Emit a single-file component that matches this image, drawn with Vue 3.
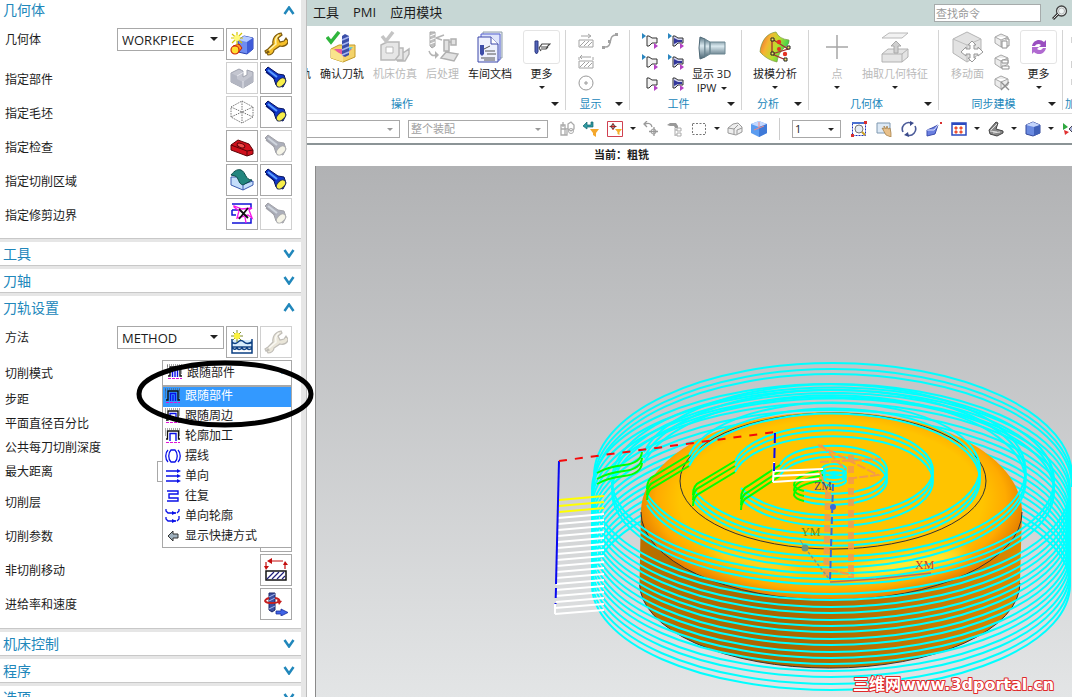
<template>
  <div class="app">
    <svg class="sprite" width="0" height="0" aria-hidden="true">
      <defs>
        <linearGradient id="g-steel" x1="0" y1="0" x2="0" y2="1">
          <stop offset="0" stop-color="#5b7785"/>
          <stop offset=".4" stop-color="#dbeaf0"/>
          <stop offset="1" stop-color="#4b6674"/>
        </linearGradient>
        <linearGradient id="g-heat" x1="0" y1="0" x2="1" y2=".4">
          <stop offset="0" stop-color="#e8543a"/>
          <stop offset=".35" stop-color="#f5b431"/>
          <stop offset=".65" stop-color="#b9e02c"/>
          <stop offset="1" stop-color="#2fd052"/>
        </linearGradient>
      </defs>
      <symbol id="i-torch" viewBox="0 0 24 24">
        <path d="M1 4 4 1 14 8 20 9 22 15 19 21 12 19 10 13Z" fill="#1037c8" stroke="#07135c" stroke-width="1"/>
        <path d="M4 4 13 11" stroke="#5b9dff" stroke-width="2"/>
        <path d="M2 6 11 13" stroke="#081a78" stroke-width="1.5"/>
        <ellipse cx="17" cy="16.500" rx="5.500" ry="3.500" transform="rotate(-45 17 16.500)" fill="#f7ee4a" stroke="#2b3350"/>
      </symbol>
      <symbol id="i-wrench" viewBox="0 0 24 24">
        <path d="M1 19 4 17 9 12C8 7 11 2 17 1L18 3 14 6 16 10 20 9 22 6 24 9C24 13 20 15 16 14L10 18C10 21 7 23 4 23L3 21 5 20 4 19 2 21Z" fill="#f6c02a" stroke="#7c5a10" stroke-width="1.200"/>
        <path d="M5 18 12 12C11 8 12 5 15 3" fill="none" stroke="#fff4b0" stroke-width="1.500"/>
      </symbol>
      <symbol id="i-newgeo" viewBox="0 0 24 24">
        <path d="M8 8 14 4 23 6V17L17 22 8 20Z" fill="#6f8cf0" stroke="#2840b0"/>
        <path d="M8 8 17 10 23 6 14 4Z" fill="#b5cbff"/>
        <path d="M17 10V22L23 17V6Z" fill="#3f5bd8"/>
        <path d="M3 14 9 12 12 16 8 21 3 21Z" fill="#ff9b1f" stroke="#c01c10"/>
        <circle cx="5" cy="18" r="4" fill="#ffdf30" stroke="#d02a10" stroke-width="1.200"/>
        <path d="M7 0V13M1 6H13M2 2 12 11M12 1 2 11" stroke="#d5c400" stroke-width="1.200"/>
        <circle cx="7" cy="6" r="3" fill="#fff97a"/>
      </symbol>
      <symbol id="i-part" viewBox="0 0 24 24">
        <path d="M1 7 9 3 13 5V11L17 9V4L23 6V16L13 22 1 16Z" fill="#c4c6d0" stroke="#9fa2ae"/>
        <path d="M1 7 7 10V13L13 16 23 9V16L13 22 1 16Z" fill="#b3b6c2"/>
        <path d="M13 15V22M7 10 14 6" stroke="#e6e7ee"/>
      </symbol>
      <symbol id="i-blank" viewBox="0 0 24 24">
        <path d="M12 1 23 7V17L12 23 1 17V7ZM12 1V12M1 7 23 17M23 7 1 17M12 12V23" fill="none" stroke="#777" stroke-width="1" stroke-dasharray="1.500 1"/>
      </symbol>
      <symbol id="i-check" viewBox="0 0 24 24">
        <path d="M1 11 8 6 19 10 23 16V20L17 22 1 16Z" fill="#d0101c" stroke="#5c0408"/>
        <path d="M1 11 17 17 23 16M17 17V22" stroke="#5c0408" fill="none"/>
        <ellipse cx="11" cy="11.500" rx="4" ry="2" fill="#f04a4a" stroke="#5c0408" transform="rotate(20 11 11.500)"/>
      </symbol>
      <symbol id="i-area" viewBox="0 0 24 24">
        <path d="M1 9V17L13 22 23 17V13L14 16 8 9Z" fill="#c5defa" stroke="#3b5bb0"/>
        <path d="M1 7C5 2 8 1 11 2C16 4 15 12 22 12L13 17C8 16 9 9 5 8Z" fill="#23867e" stroke="#0b4b48"/>
        <path d="M13 17V22" stroke="#3b5bb0"/>
      </symbol>
      <symbol id="i-trim" viewBox="0 0 24 24">
        <path d="M2 2H21V7M2 8V13H6M21 16V21H2M2 8H8" fill="none" stroke="#1111d8" stroke-width="1.500"/>
        <path d="M4 5 9 9 7 16 18 13 22 16 19 8 22 6 12 7 4 4ZM15 15 16 21" fill="none" stroke="#f414e8" stroke-width="1.300"/>
        <path d="M9 7 18 16M18 6 9 17" stroke="#111" stroke-width="1.800"/>
      </symbol>
      <symbol id="i-method" viewBox="0 0 24 24">
        <path d="M2 10H22V16H2Z" fill="#d7ecfb"/>
        <path d="M2 9V23H22V9M2 12Q5 15 8 12T14 12T22 12M2 17H22M2 17Q4 21 7 18Q9 21 12 18Q14 21 17 18Q19 21 22 18" fill="none" stroke="#0b3f82" stroke-width="1.500"/>
        <path d="M7 0V12M1 6H13M3 2 11 10M11 2 3 10" stroke="#7c8a28" stroke-width="1"/>
        <circle cx="7" cy="6" r="3.200" fill="#fbf23e"/>
      </symbol>
      <symbol id="i-noncut" viewBox="0 0 24 24">
        <path d="M2 13H22V22H2Z" fill="#fff" stroke="#111" stroke-width="1.500"/>
        <path d="M3 21 10 14M8 21 15 14M13 21 20 14M18 21 21 18" stroke="#22207c" stroke-width="1.200"/>
        <path d="M19 3H6M2 4V9M21 11V6" stroke="#c40d0d" stroke-width="1.200"/>
        <path d="M8 0 3 3 8 6ZM0 8H5L2 12ZM19 7H24L21 3Z" fill="#c40d0d"/>
      </symbol>
      <symbol id="i-feed" viewBox="0 0 24 24">
        <path d="M5 1H11V18L8 20 5 18Z" fill="#3c4fa2" stroke="#1b2768"/>
        <path d="M5 5 11 2M5 9 11 6M5 17 11 14" stroke="#a9b9ee"/>
        <path d="M5 6C-1 8 0 11 8 11S18 7 11 6" fill="none" stroke="#c41f1f" stroke-width="2"/>
        <path d="M13 8 15 13 18 9Z" fill="#c41f1f"/>
        <path d="M12 19H17V17L24 20.500 17 24V22H12Z" fill="#3f63e6" stroke="#1a2f9a" stroke-width=".8"/>
      </symbol>
      <symbol id="i-m-part" viewBox="0 0 16 16">
        <path d="M0 1H16M0 2H2M14 2H16M0 3H2M14 3H16M0 5H2M14 5H16M0 7H2M14 7H16M0 9H2M14 9H16" stroke="#555" stroke-dasharray="1 1"/>
        <path d="M1 12H3V3H13V12H15" fill="none" stroke="#111" stroke-width="1.400"/>
        <path d="M5.500 13V5.500H10.500V13M8 13V7" fill="none" stroke="#0a10e8" stroke-width="1.400"/>
        <path d="M1 14.500H15" stroke="#e012d8" stroke-dasharray="3 1"/>
      </symbol>
      <symbol id="i-m-around" viewBox="0 0 16 16">
        <path d="M0 1H16M0 3H2M14 3H16M0 5H2M14 5H16M0 7H2M14 7H16" stroke="#555" stroke-dasharray="1 1"/>
        <path d="M1 12H3V3H13V12H15" fill="none" stroke="#111" stroke-width="1.400"/>
        <path d="M5 12V5.500H11V12H8V8" fill="none" stroke="#0a10e8" stroke-width="1.300"/>
        <path d="M1 14.500H15" stroke="#e012d8" stroke-dasharray="3 1"/>
      </symbol>
      <symbol id="i-m-profile" viewBox="0 0 16 16">
        <path d="M0 1H16M0 3H2M14 3H16M0 5H2M14 5H16M0 7H2M14 7H16" stroke="#555" stroke-dasharray="1 1"/>
        <path d="M1 11H2.500V3H13.500V11H15" fill="none" stroke="#111" stroke-width="1.300"/>
        <path d="M5 13V5.500H11V13" fill="none" stroke="#0a10e8" stroke-width="1.400"/>
        <path d="M1 14.500H15" stroke="#e012d8" stroke-dasharray="3 1"/>
      </symbol>
      <symbol id="i-m-trochoid" viewBox="0 0 16 16">
        <path d="M3 2C0 5 0 11 3 14M13 2C16 5 16 11 13 14M6 2C3 5 3 11 6 14H10C13 11 13 5 10 2Z" fill="none" stroke="#0a10e8" stroke-width="1.300"/>
      </symbol>
      <symbol id="i-m-zig" viewBox="0 0 16 16">
        <path d="M1 3H12M1 8H12M1 13H12" stroke="#0a10e8" stroke-width="1.400"/>
        <path d="M12 1 16 3 12 5ZM12 6 16 8 12 10ZM12 11 16 13 12 15Z" fill="#0a10e8"/>
      </symbol>
      <symbol id="i-m-zigzag" viewBox="0 0 16 16">
        <path d="M2 3H13V6H4V10H13V13H2" fill="none" stroke="#0a10e8" stroke-width="1.400"/>
      </symbol>
      <symbol id="i-m-contour" viewBox="0 0 16 16">
        <path d="M1 1V3L3 5H11M14 1V3L12 5M1 9V11L3 13H11M14 8V11L12 13" fill="none" stroke="#0a10e8" stroke-width="1.300"/>
        <path d="M7 3 11 5 7 7ZM7 11 11 13 7 15Z" fill="#0a10e8"/>
      </symbol>
      <symbol id="i-m-short" viewBox="0 0 16 16">
        <path d="M3 8 8 3V6H13V10H8V13Z" fill="#9fb0bd" stroke="#333"/>
      </symbol>

      <symbol id="i-verify" viewBox="0 0 32 32">
        <path d="M5 18 13 14H29V26L17 31 5 27Z" fill="#f4d36a" stroke="#c39a28"/>
        <path d="M8 18H26L17 26Z" fill="#e95a9d"/>
        <path d="M18 17 27 16 18 25Z" fill="#4fc5e0"/>
        <path d="M5 18 17 24V31L5 27Z" fill="#fae48c"/>
        <path d="M16 5 19 3 23 5V24L19 26 16 24Z" fill="#3b4fa8"/>
        <path d="M16 9 23 6M16 14 23 11M16 19 23 16M16 24 23 21" stroke="#a8b6f0" stroke-width="1.500"/>
        <path d="M1 6 5 11 13 1" fill="none" stroke="#2fb63c" stroke-width="3.500"/>
      </symbol>
      <symbol id="i-machine" viewBox="0 0 32 32">
        <path d="M2 14 8 11H20V24L16 29H2ZM20 17H24V29H17M24 22 30 18V23L26 30H18" fill="#e6e6e6" stroke="#b8b8b8" stroke-width="1.500"/>
        <path d="M7 16H14V22H7Z" fill="#fff" stroke="#b8b8b8"/>
        <path d="M3 5 7 10 14 1" fill="none" stroke="#c4c4c4" stroke-width="3.500"/>
      </symbol>
      <symbol id="i-post" viewBox="0 0 32 32">
        <path d="M3 1H8V15L5 17 3 15Z" fill="#c0c0c0" stroke="#a8a8a8"/>
        <path d="M3 5 8 3M3 9 8 7M3 13 8 11" stroke="#fff"/>
        <path d="M9 7 17 4M9 7 15 9M2 20Q4 26 9 24" stroke="#b4b4b4" stroke-width="1.500" fill="none"/>
        <path d="M8 20 12 24 8 28Z" fill="#b4b4b4"/>
        <path d="M17 9H22V20H17ZM24 8H29V14H24ZM22 11H24M14 27 19 21 31 23 27 30Z" fill="#e2e2e2" stroke="#b0b0b0" stroke-width="1.500"/>
      </symbol>
      <symbol id="i-doc" viewBox="0 0 32 32">
        <path d="M9 1H28V27H9Z" fill="#e2e8f4" stroke="#92a0a8"/>
        <path d="M7 3H26V29H7Z" fill="#dfe5fb" stroke="#5561d0"/>
        <path d="M4 6H17L24 13V31H4Z" fill="#eef1fe" stroke="#3a46a8"/>
        <path d="M17 6V13H24" fill="#fff" stroke="#3a46a8"/>
        <path d="M6 14H10V23L8 25 6 23Z" fill="#3c4ca8"/>
        <path d="M10 18 16 15M11 20H21M13 23H22M7 27H21M10 29H21" stroke="#555"/>
      </symbol>
      <symbol id="i-moreop" viewBox="0 0 18 18">
        <path d="M2 3H5V14L3.500 16 2 14Z" fill="#5162b8" stroke="#2a3780"/>
        <path d="M6 10 9 6H17L14 9H8M6 10 8 13M8 11H13L15 9" fill="none" stroke="#444" stroke-width="1.200"/>
      </symbol>
      <symbol id="i-moresync" viewBox="0 0 18 18">
        <path d="M2 8C3 2 10 0 14 4L16 2V9H9L11 7C9 5 6 6 5 8Z" fill="#9a4fc0"/>
        <path d="M16 10C15 16 8 18 4 14L2 16V9H9L7 11C9 13 12 12 13 10Z" fill="#b06ad0"/>
      </symbol>
      <symbol id="i-hatch" viewBox="0 0 16 16">
        <path d="M1 7H15V14H1ZM2 13 7 8M6 13 11 8M10 13 14 9M3 3H12M10 1 13 3 10 5" fill="none" stroke="#a2a2a2"/>
      </symbol>
      <symbol id="i-hatch2" viewBox="0 0 16 16">
        <path d="M1 7H15V14H1ZM2 13 7 8M6 13 11 8M10 13 14 9M3 3H13M1 3V6M15 3V6M4 1 2 3 4 5" fill="none" stroke="#a2a2a2"/>
      </symbol>
      <symbol id="i-curve" viewBox="0 0 16 16">
        <path d="M2 14C12 15 5 2 14 2" fill="none" stroke="#a2a2a2" stroke-width="1.500"/>
        <path d="M0 13H3V16H0ZM6 7H9V10H6ZM13 0H16V3H13Z" fill="#a2a2a2"/>
      </symbol>
      <symbol id="i-circle" viewBox="0 0 16 16">
        <circle cx="8" cy="8" r="7" fill="none" stroke="#999"/>
        <path d="M8 6V10M6 8H10" stroke="#999"/>
      </symbol>
      <symbol id="i-wp" viewBox="0 0 16 16">
        <path d="M5 3H7L10 5H15V10H10L7 13H5Z" fill="#f2f2f2" stroke="#333"/>
        <path d="M12 10 16 13 12 16Z" fill="#b442c4"/>
      </symbol>
      <symbol id="i-wpb" viewBox="0 0 16 16">
        <path d="M5 3H7L10 5H15V10H10L7 13H5Z" fill="#d0d2ee" stroke="#333"/>
        <path d="M6 5 10 7H14V9H10L6 11Z" fill="#34389c"/>
        <path d="M12 10 16 13 12 16Z" fill="#b442c4"/>
      </symbol>
      <symbol id="i-ipw" viewBox="0 0 32 32">
        <path d="M4 6 9 8V26L4 28Q2 17 4 6Z" fill="url(#g-steel)" stroke="#506a78"/>
        <path d="M9 8 14 11V23L9 26ZM14 11H29V23H14Z" fill="url(#g-steel)" stroke="#6c8792"/>
      </symbol>
      <symbol id="i-draft" viewBox="0 0 32 32">
        <path d="M1 21C2 10 8 2 17 1Q20 8 30 9Q31 13 26 16 19 22 18 31 8 29 1 21Z" fill="url(#g-heat)" stroke="#7c9b3c" stroke-width=".7"/>
        <path d="M13 8 29 18 13 23 27 29M13 8V23" fill="none" stroke="#a33030" stroke-width="1.300"/>
        <path d="M12 7H15V10H12ZM28 15H31V18H28ZM12 21H15V24H12ZM25 27H28V30H25Z" fill="#f6e76a" stroke="#222"/>
        <circle cx="20" cy="11" r="2.200" fill="#e53222"/>
        <circle cx="26" cy="23" r="2.200" fill="#e53222"/>
        <circle cx="20" cy="18" r="2" fill="#e53222"/>
      </symbol>
      <symbol id="i-plus" viewBox="0 0 32 32">
        <path d="M16 4V28M5 16H27" stroke="#a6a6a6" stroke-width="1.500"/>
      </symbol>
      <symbol id="i-extract" viewBox="0 0 32 32">
        <path d="M10 2H29L23 7H3Z" fill="#f2f2f2" stroke="#b9b9b9"/>
        <path d="M3 23 9 18H29V26L23 31H3Z" fill="#e4e4e4" stroke="#b2b2b2"/>
        <path d="M3 23H23V31M23 23 29 18" fill="none" stroke="#b2b2b2"/>
        <path d="M15 22V15H12L17 10 22 15H19V22Z" fill="#cfcfcf" stroke="#a8a8a8"/>
      </symbol>
      <symbol id="i-moveface" viewBox="0 0 32 32">
        <path d="M15 1 29 8V22L15 31 1 22V8Z" fill="#e2e2e2" stroke="#b4b4b4"/>
        <path d="M1 8 15 14 29 8M15 14V31" fill="none" stroke="#bdbdbd"/>
        <path d="M20 10 24 14H22V18H26V16L31 21 26 25V23H22V27H24L20 31 16 27H18V23H14V25L9 21 14 16V18H18V14H16Z" fill="#fff" stroke="#999"/>
      </symbol>
      <symbol id="i-box1" viewBox="0 0 16 16">
        <path d="M7 1 14 4V10L7 14 1 10V4ZM1 4 7 7 14 4M7 7V14" fill="#ececec" stroke="#a8a8a8"/>
        <path d="M8 8H13V15H8ZM11 6H15V13H13" fill="#fff" stroke="#8f8f8f"/>
      </symbol>
      <symbol id="i-box2" viewBox="0 0 16 16">
        <path d="M7 1 14 4V10L7 14 1 10V4ZM1 4 7 7 14 4M7 7V14" fill="#ececec" stroke="#a8a8a8"/>
        <path d="M8 6H14V9H8ZM8 12H15V15H8Z" fill="#fff" stroke="#8f8f8f"/>
      </symbol>
      <symbol id="i-box3" viewBox="0 0 16 16">
        <path d="M7 1 14 4V10L7 14 1 10V4ZM1 4 7 7 14 4M7 7V14" fill="#ececec" stroke="#a8a8a8"/>
        <path d="M7 7 15 15M15 7 7 15" stroke="#8f8f8f" stroke-width="1.300"/>
      </symbol>
      <symbol id="i-find" viewBox="0 0 16 16">
        <circle cx="9.500" cy="6" r="5" fill="#eef4f4" stroke="#444" stroke-width="1.300"/>
        <circle cx="9.500" cy="6" r="3" fill="none" stroke="#999" stroke-width=".7"/>
        <path d="M6 9 1 14" stroke="#333" stroke-width="3"/>
        <path d="M6 9 1.500 13.500" stroke="#ddd" stroke-width="1"/>
      </symbol>

      <symbol id="i-s-asm" viewBox="0 0 16 16">
        <path d="M2 4H6V14H2ZM2 8H9M4 1V6M9 3 12 1 15 4V8L12 10 9 8ZM8 9V14H4" fill="none" stroke="#aaa" stroke-width="1.300"/>
        <circle cx="12" cy="10" r="2.500" fill="none" stroke="#aaa"/>
      </symbol>
      <symbol id="i-s-undo" viewBox="0 0 16 16">
        <path d="M4 1 0 5 4 8V6H10V1H8V4H4Z" fill="#2f9aa2" stroke="#12666e" stroke-width=".7"/>
        <path d="M7 8H16L13 12V16L10 14V12Z" fill="#f4a72c"/>
      </symbol>
      <symbol id="i-s-filter" viewBox="0 0 16 16">
        <path d="M.5.500H15.500V15.500H.5Z" fill="#fff" stroke="#d04050"/>
        <path d="M6 2V9M2.500 5.500H9.500" stroke="#c02020" stroke-width="1.200"/>
        <circle cx="6" cy="5.500" r="2" fill="none" stroke="#333" stroke-width=".8"/>
        <path d="M8 8H15L12.500 11V14L10.500 13V11Z" fill="#f4b12c"/>
      </symbol>
      <symbol id="i-s-snap" viewBox="0 0 16 16">
        <path d="M9 6Q8 1 2 3M4 0 1 3 4 6M11 6V15M6 10.500H15" fill="none" stroke="#999" stroke-width="1.300"/>
        <circle cx="10.500" cy="10.500" r="2.500" fill="none" stroke="#999"/>
      </symbol>
      <symbol id="i-s-tree" viewBox="0 0 16 16">
        <path d="M0 4 3 2H9L11 5V7H8L7 5H3Z" fill="#999"/>
        <path d="M8 7V15M8 9H10M8 14H10M10 7H14V10H10ZM10 12H14V15H10Z" fill="none" stroke="#aaa"/>
      </symbol>
      <symbol id="i-s-rect" viewBox="0 0 16 16">
        <path d="M1.500 2.500H14.500V13.500H1.500Z" fill="none" stroke="#777" stroke-dasharray="2 1.500"/>
      </symbol>
      <symbol id="i-s-solid" viewBox="0 0 16 16">
        <path d="M1 7 6 3 11 2 15 6V11L9 14 1 12Z" fill="#eee" stroke="#999"/>
        <path d="M1 7 7 8 11 4M7 8V13M10 13V9L15 7" fill="none" stroke="#999"/>
      </symbol>
      <symbol id="i-s-cube" viewBox="0 0 16 16">
        <path d="M8 0 16 3V12L8 16 0 12V3Z" fill="#5b9cf0"/>
        <path d="M0 3 8 6 16 3 8 0Z" fill="#c3d8ff"/>
        <path d="M8 6V16L16 12V3Z" fill="#3f7ad8"/>
        <path d="M8 1V7L3 9M8 7 13 5" fill="none" stroke="#e88"/>
      </symbol>
      <symbol id="i-s-zoom" viewBox="0 0 16 16">
        <path d="M1.500 2.500H14.500V14.500H1.500Z" fill="none" stroke="#1c2fb8" stroke-dasharray="2 1"/>
        <path d="M1 2H13" stroke="#4a70d0" stroke-width="2"/>
        <circle cx="8" cy="8" r="4" fill="#e7edf4" stroke="#777"/>
        <path d="M11 11 14 14" stroke="#caa020" stroke-width="2"/>
        <path d="M13 0H16V3H13ZM0 13H3V16H0Z" fill="#d83030"/>
      </symbol>
      <symbol id="i-s-pan" viewBox="0 0 16 16">
        <path d="M1 2H14V12H1Z" fill="#dde9f5" stroke="#7f98b0"/>
        <path d="M6 7 8 8 8 5 10 8 11 5 12 8 14 7 15 12V16L10 14Z" fill="#e8c08a" stroke="#a07a40" stroke-width=".7"/>
      </symbol>
      <symbol id="i-s-rotate" viewBox="0 0 16 16">
        <path d="M2 11A6.500 6.500 0 0 1 10 2M14 5A6.500 6.500 0 0 1 6 14" fill="none" stroke="#4a5a98" stroke-width="1.600"/>
        <path d="M9 0 13 2 9 5ZM7 11 3 14 8 16Z" fill="#3a4a8a"/>
      </symbol>
      <symbol id="i-s-persp" viewBox="0 0 16 16">
        <path d="M1 9 6 7 12 4 9 13 1 15Z" fill="#6a7fe0" stroke="#3a4cae"/>
        <path d="M1 9 8 9 12 4" fill="none" stroke="#dfe5ff"/>
        <path d="M14 1H16V3H14Z" fill="#d83030"/>
      </symbol>
      <symbol id="i-s-win" viewBox="0 0 16 16">
        <path d="M1 2H15V14H1Z" fill="#fff" stroke="#2b4ac0" stroke-width="1.500"/>
        <path d="M1 2H15V4H1Z" fill="#2b4ac0"/>
        <path d="M4 6H6V8H4ZM9 6H11V8H9ZM4 10H6V12H4ZM9 10H11V12H9Z" fill="#ee5030" stroke="#ee5030"/>
      </symbol>
      <symbol id="i-s-shade" viewBox="0 0 16 16">
        <path d="M1 9 8 1 10 2 8 8 15 10V12L9 15 2 13Z" fill="#888" stroke="#444"/>
        <path d="M3 9 9 3M5 12 12 11M2 10 9 11" stroke="#ddd"/>
      </symbol>
      <symbol id="i-s-view" viewBox="0 0 16 16">
        <path d="M1 4 8 1 15 4V12L8 15 1 13Z" fill="#6a8ae0" stroke="#33489c"/>
        <path d="M1 4 9 6 15 4 8 1Z" fill="#c3d4fb"/>
        <path d="M9 6V15L15 12V4Z" fill="#4060b8"/>
      </symbol>
      <symbol id="i-s-csys" viewBox="0 0 16 16">
        <path d="M1 2 6 6 1 9Z" fill="#2fa840"/>
        <path d="M2 9 7 11 3 14Z" fill="#e03030"/>
        <path d="M7 8 13 2 16 8 12 13Z" fill="#aab4d8" stroke="#445"/>
      </symbol>
    </svg>

    <aside class="panel">
      <section class="section first">
        <h2 class="section-head">几何体<svg class="chevron" viewBox="0 0 12 9"><path d="M1.500 8 6 1.500 10.500 8"/></svg></h2>
        <div class="row top">
          <label for="geometry">几何体</label>
          <span class="select-box">
            <select id="geometry"><option>WORKPIECE</option></select>
          </span>
          <button class="icon-btn" aria-label="新建几何体"><svg><use href="#i-newgeo"/></svg></button>
          <button class="icon-btn" aria-label="编辑几何体"><svg><use href="#i-wrench"/></svg></button>
        </div>
        <div v-for="row in geometryRows" :key="row.label" class="row">
          <span class="row-label">{{ row.label }}</span>
          <button class="icon-btn" :class="{ pale: row.pale }" :aria-label="row.label"><svg><use :href="row.icon"/></svg></button>
          <button class="icon-btn" :disabled="!row.shown" aria-label="显示"><svg><use href="#i-torch"/></svg></button>
        </div>
      </section>

      <section v-for="name in ['工具', '刀轴']" :key="name" class="section">
        <h2 class="section-head">{{ name }}<svg class="chevron" viewBox="0 0 12 9"><path d="M1.500 1 6 7.500 10.500 1"/></svg></h2>
      </section>

      <section class="section settings">
        <h2 class="section-head">刀轨设置<svg class="chevron" viewBox="0 0 12 9"><path d="M1.500 8 6 1.500 10.500 8"/></svg></h2>
        <div class="row top">
          <label for="method">方法</label>
          <span class="select-box">
            <select id="method"><option>METHOD</option></select>
          </span>
          <button class="icon-btn" aria-label="新建方法"><svg><use href="#i-method"/></svg></button>
          <button class="icon-btn" disabled aria-label="编辑方法"><svg><use href="#i-wrench"/></svg></button>
        </div>
        <div class="row mode">
          <span id="cut-mode-label" class="row-label">切削模式</span>
          <div class="combo">
            <button class="combo-value" aria-labelledby="cut-mode-label" aria-expanded="true" @click="open = !open">
              <svg class="mode-icon"><use :href="cutModes[selected].icon"/></svg>{{ cutModes[selected].label }}<i class="caret mode-caret"></i>
            </button>
            <ul v-if="open" class="combo-list" role="listbox">
              <li
                  v-for="(mode, index) in cutModes"
                  :key="mode.label"
                  role="option"
                  :class="{ active: index === selected }"
                  @click="selected = index"
              >
                <svg class="mode-icon"><use :href="mode.icon"/></svg>{{ mode.label }}
              </li>
            </ul>
          </div>
        </div>
        <div class="row short"><span class="row-label">步距</span></div>
        <div class="row short"><span class="row-label">平面直径百分比</span></div>
        <div class="row short"><span class="row-label">公共每刀切削深度</span></div>
        <div class="row short">
          <label for="max-distance">最大距离</label>
          <input id="max-distance" class="field" type="text">
        </div>
        <div v-for="row in actionRows" :key="row.label" class="row">
          <span class="row-label">{{ row.label }}</span>
          <button class="icon-btn" :aria-label="row.label"><svg><use :href="row.icon"/></svg></button>
        </div>
      </section>

      <section v-for="name in ['机床控制', '程序', '选项']" :key="name" class="section">
        <h2 class="section-head">{{ name }}<svg class="chevron" viewBox="0 0 12 9"><path d="M1.500 1 6 7.500 10.500 1"/></svg></h2>
      </section>
    </aside>

    <main class="workspace">
      <nav class="menubar">
        <a href="#">工具</a>
        <a href="#">PMI</a>
        <a href="#">应用模块</a>
        <input class="search" type="text" placeholder="查找命令" aria-label="查找命令">
        <svg class="search-icon"><use href="#i-find"/></svg>
      </nav>

      <div class="ribbon">
        <div class="group operate">
          <div class="group-body">
            <button class="tool"><span class="tool-icon"></span>生成刀轨</button>
            <button class="tool"><span class="tool-icon"><svg><use href="#i-verify"/></svg></span>确认刀轨</button>
            <button class="tool" disabled><span class="tool-icon"><svg><use href="#i-machine"/></svg></span>机床仿真</button>
            <button class="tool" disabled><span class="tool-icon"><svg><use href="#i-post"/></svg></span>后处理</button>
            <button class="tool"><span class="tool-icon"><svg><use href="#i-doc"/></svg></span>车间文档</button>
            <button class="tool more"><span class="tool-icon"><svg><use href="#i-moreop"/></svg></span>更多<i class="caret"></i></button>
          </div>
          <div class="group-foot"><span>操作</span><i class="caret big"></i></div>
        </div>
        <div class="group display">
          <div class="group-body">
            <div class="icon-grid">
              <svg><use href="#i-hatch"/></svg>
              <svg><use href="#i-curve"/></svg>
              <svg><use href="#i-hatch2"/></svg>
              <span></span>
              <svg><use href="#i-circle"/></svg>
            </div>
          </div>
          <div class="group-foot"><span>显示</span><i class="caret big"></i></div>
        </div>
        <div class="group workpiece">
          <div class="group-body">
            <div class="icon-grid wide">
              <svg v-for="n in 6" :key="n" viewBox="0 0 16 16">
                <use :href="n % 2 ? '#i-wp' : '#i-wpb'" width="16" height="16"/>
                <path v-if="n < 5" d="M0 0 4 3 0 6Z" fill="#2a86c0"/>
              </svg>
            </div>
            <button class="tool"><span class="tool-icon"><svg><use href="#i-ipw"/></svg></span>显示 3D<span class="line">IPW<i class="caret"></i></span></button>
          </div>
          <div class="group-foot"><span>工件</span><i class="caret big"></i></div>
        </div>
        <div class="group analyse">
          <div class="group-body">
            <button class="tool"><span class="tool-icon"><svg><use href="#i-draft"/></svg></span>拔模分析<i class="caret"></i></button>
          </div>
          <div class="group-foot"><span>分析</span><i class="caret big"></i></div>
        </div>
        <div class="group geometry">
          <div class="group-body">
            <button class="tool" disabled><span class="tool-icon"><svg><use href="#i-plus"/></svg></span>点<i class="caret"></i></button>
            <button class="tool" disabled><span class="tool-icon"><svg><use href="#i-extract"/></svg></span>抽取几何特征<i class="caret"></i></button>
          </div>
          <div class="group-foot"><span>几何体</span><i class="caret big"></i></div>
        </div>
        <div class="group sync">
          <div class="group-body">
            <button class="tool" disabled><span class="tool-icon"><svg><use href="#i-moveface"/></svg></span>移动面</button>
            <div class="icon-grid single">
              <svg><use href="#i-box1"/></svg>
              <svg><use href="#i-box2"/></svg>
              <svg><use href="#i-box3"/></svg>
            </div>
            <button class="tool more"><span class="tool-icon"><svg><use href="#i-moresync"/></svg></span>更多<i class="caret"></i></button>
          </div>
          <div class="group-foot"><span>同步建模</span><i class="caret big"></i></div>
        </div>
        <div class="group process">
          <div class="group-body">
            <div class="icon-grid single">
              <svg><use href="#i-box1"/></svg>
              <svg><use href="#i-hatch"/></svg>
              <svg><use href="#i-box2"/></svg>
            </div>
          </div>
          <div class="group-foot"><span>加工</span></div>
        </div>
      </div>

      <div class="selection">
        <span class="select-box gray type"><select aria-label="类型过滤器"><option></option></select></span>
        <span class="select-box gray scope"><select aria-label="选择范围"><option>整个装配</option></select></span>
        <template v-for="(item, index) in leftTools" :key="index">
          <i v-if="item === '|'" class="cell-caret"><i class="caret"></i></i>
          <button v-else class="cell" :aria-label="item"><svg><use :href="'#i-s-' + item"/></svg></button>
        </template>
        <i class="divider"></i>
        <span class="select-box layer"><select aria-label="工作图层"><option>1</option></select></span>
        <template v-for="(item, index) in rightTools" :key="index">
          <i v-if="item === '|'" class="cell-caret"><i class="caret"></i></i>
          <button v-else class="cell wide" :aria-label="item"><svg><use :href="'#i-s-' + item"/></svg></button>
        </template>
      </div>

      <p class="status">当前：粗铣</p>

      <div class="viewport">
        <svg class="scene" viewBox="315 166 757 531" preserveAspectRatio="xMinYMin slice">
          <defs>
            <radialGradient id="dome" gradientUnits="userSpaceOnUse" cx="0" cy="0" r="1" gradientTransform="translate(830 500) scale(194 101)">
              <stop offset="0" stop-color="#ffc400"/>
              <stop offset=".78" stop-color="#ffc400"/>
              <stop offset=".9" stop-color="#ffab00"/>
              <stop offset="1" stop-color="#e88300"/>
            </radialGradient>
            <linearGradient id="wall" x1="0" x2="1" y1="0" y2="0">
              <stop offset="0" stop-color="#b87000"/>
              <stop offset=".35" stop-color="#a86400"/>
              <stop offset=".6" stop-color="#b87000"/>
              <stop offset="1" stop-color="#dc8a00"/>
            </linearGradient>
            <filter id="soft" x="-30%" y="-100%" width="160%" height="300%"><feGaussianBlur stdDeviation="6"/></filter>
          </defs>

          <g class="path">
            <path v-for="(d, i) in backPaths" :key="i" :d="d"/>
          </g>

          <path d="M640 510 638.500 583A190 85 0 0 0 1019 583L1021 510Z" fill="url(#wall)"/>
          <path d="M640 512C640 462 712 412 830 412S1021 462 1021 512A190.500 88 0 0 1 640 512Z" fill="url(#dome)"/>
          <ellipse cx="905" cy="564" rx="60" ry="8" fill="#fff23c" filter="url(#soft)" transform="rotate(-10 905 564)"/>
          <ellipse cx="755" cy="562" rx="45" ry="6" fill="#ffd92a" filter="url(#soft)" transform="rotate(14 755 562)"/>
          <g class="edge">
            <path d="M640 512A190.500 88 0 0 0 1021 512"/>
            <path d="M638.500 583A190 85 0 0 0 1019 583"/>
            <ellipse cx="832" cy="481" rx="153" ry="68"/>
          </g>

          <g class="path">
            <path v-for="(d, i) in frontPaths" :key="i" :d="d"/>
            <ellipse v-for="n in 4" :key="'c' + n" cx="833" :cy="465 + n * 4" rx="12" ry="5"/>
          </g>
          <g class="path link">
            <path v-for="(d, i) in linkPaths" :key="i" :d="d"/>
          </g>
          <g class="path entry">
            <path v-for="n in 17" :key="n" :d="entryLine(n + 2)"/>
            <path d="M554 604V614M773 462 772 482M773 471 822 469M773 476 820 474M772 482 818 479"/>
          </g>
          <g class="path yellow">
            <path v-for="n in 3" :key="n" :d="entryLine(n - 1)"/>
          </g>

          <g class="axes">
            <path d="M827 492 825 578M850 455V578" stroke="#f49a4c" stroke-width="6" stroke-dasharray="7 4" opacity=".85"/>
            <path d="M817 445 877 475 845 479M819 462 880 459M820 445 845 470M826 492 818 470M828 570 853 575" stroke="#f49a4c" stroke-width="2" stroke-dasharray="9 2"/>
            <path d="M832 484 829 581" stroke="#3f68d0" stroke-width="2" stroke-dasharray="7 4"/>
            <circle cx="832" cy="507" r="3" fill="#3d68d8"/>
            <path d="M804 548 829 580" stroke="#7f9a80" stroke-width="1.500" stroke-dasharray="3 2"/>
            <path d="M799 540 804 548" stroke="#7f9a80"/>
            <circle cx="804" cy="548" r="3.500" fill="#6e9480"/>
            <path d="M829 582 875 579 930 573" stroke="#b8705a" stroke-width="1.500"/>
            <text x="813" y="490" fill="#4a4a70">ZM</text>
            <text x="800" y="536" fill="#6b8a10">YM</text>
            <text x="914" y="569" fill="#d04020">XM</text>
          </g>

          <path d="M558 461 555 584" stroke="#0a0af0" stroke-width="2"/>
          <path d="M555 588 554.500 604M774 433 773 471" stroke="#0a0af0" stroke-width="2" stroke-dasharray="10 5"/>
          <path d="M558 461 774 432" stroke="#f40a0a" stroke-width="2" stroke-dasharray="8 8"/>
          <text class="watermark" x="852" y="690">三维网www.3dportal.cn</text>
        </svg>
      </div>
    </main>

    <svg class="marker" viewBox="0 0 178 70"><ellipse cx="89" cy="35" rx="86" ry="31"/></svg>
  </div>
</template>

<script setup>
import { ref } from 'vue'

const open = ref(true)
const selected = ref(0)

const geometryRows = [
  { label: '指定部件', icon: '#i-part', pale: true, shown: true },
  { label: '指定毛坯', icon: '#i-blank', pale: true, shown: true },
  { label: '指定检查', icon: '#i-check', shown: false },
  { label: '指定切削区域', icon: '#i-area', shown: true },
  { label: '指定修剪边界', icon: '#i-trim', shown: false }
]

const cutModes = [
  { label: '跟随部件', icon: '#i-m-part' },
  { label: '跟随周边', icon: '#i-m-around' },
  { label: '轮廓加工', icon: '#i-m-profile' },
  { label: '摆线', icon: '#i-m-trochoid' },
  { label: '单向', icon: '#i-m-zig' },
  { label: '往复', icon: '#i-m-zigzag' },
  { label: '单向轮廓', icon: '#i-m-contour' },
  { label: '显示快捷方式', icon: '#i-m-short' }
]

const actionRows = [
  { label: '切削层', icon: '#i-m-zig' },
  { label: '切削参数', icon: '#i-m-zigzag' },
  { label: '非切削移动', icon: '#i-noncut' },
  { label: '进给率和速度', icon: '#i-feed' }
]

const leftTools = ['asm', 'undo', 'filter', '|', 'snap', 'tree', 'rect', '|', 'solid', 'cube']
const rightTools = ['zoom', 'pan', 'rotate', 'persp', 'win', '|', 'shade', '|', 'view', '|', 'csys']

// angles in degrees, clockwise from the right-hand side
function point(cx, cy, rx, ry, angle) {
  const a = angle * Math.PI / 180
  return [Math.round(cx + rx * Math.cos(a)), Math.round(cy + ry * Math.sin(a))]
}

function arc(cx, cy, rx, ry, from, to) {
  const [x1, y1] = point(cx, cy, rx, ry, from)
  const [x2, y2] = point(cx, cy, rx, ry, to)
  const large = Math.abs(to - from) > 180 ? 1 : 0
  return `M${x1} ${y1}A${rx} ${ry} 0 ${large} 0 ${x2} ${y2}`
}

const backPaths = []
const frontPaths = []
const linkPaths = []

// levels around the wall
for (let k = 0; k < 16; k++) {
  const cy = 489 + k * 6.4
  backPaths.push(arc(830, cy, 239, 105, 0, -180))
  frontPaths.push(arc(830, cy, 239, 105, 180, 0))
}

// levels over the dome
const rings = [
  { rx: 54, ry: 24, cy: 470, start: 122 },
  { rx: 100, ry: 45, cy: 470, start: 157 },
  { rx: 147, ry: 66, cy: 469, start: 162 },
  { rx: 193, ry: 86, cy: 470, start: 164 }
]
rings.forEach((ring, index) => {
  for (let n = 0; n < 3; n++) {
    const cy = ring.cy + n * 5.5
    frontPaths.push(arc(832, cy, ring.rx, ring.ry, ring.start, -168))
    const [x1, y1] = point(832, cy, ring.rx, ring.ry, -168)
    const next = rings[index + 1]
    if (next) {
      const x2 = point(832, cy, next.rx, next.ry, next.start)[0]
      linkPaths.push(`M${x1} ${y1}L${x2 + 7} ${y1 + 21}Q${x2} ${y1 + 24} ${x2} ${y1 + 34}`)
    } else {
      linkPaths.push(`M${x1 - 2} ${y1}Q${x1 - 3} ${y1 + 11} ${x1 - 20} ${y1 + 13}T${x1 - 47} ${y1 + 21}`)
    }
  }
})
for (let n = 0; n < 3; n++) {
  const y = 470 + n * 5
  linkPaths.push(`M822 ${y}Q793 ${y + 5} 793 ${y + 15}Q794 ${y + 19} 803 ${y + 21}`)
  frontPaths.push(arc(832, 482 + n * 5.5, 221, 93, 180, -178))
  frontPaths.push(arc(832, 476 + n * 5.5, 239, 113, 0, -180))
}

function entryLine(n) {
  const y = Math.round(500 + n * 6)
  return `M${Math.round(558 - n * 0.2)} ${y}L603 ${y - 4}`
}
</script>

<style>
body {
  margin: 0;
  overflow: hidden;
}
</style>

<style scoped>
.app {
  position: relative;
  display: flex;
  height: 100vh;
  overflow: hidden;
  background-color: #fff;
  color: #1c1c1c;
  font-family: "Open Sans", "Noto Sans CJK SC", sans-serif;
  font-size: 12px;
}

.app * {
  box-sizing: border-box;
}

.sprite {
  position: absolute;
}

button {
  padding: 0;
  border: 0;
  background: none;
  color: inherit;
  font: inherit;
}

/* left panel */
.panel {
  flex: none;
  width: 307px;
  padding-right: 5px;
  overflow: hidden;
  background-color: #e6e6e6;
  border-right: 1px solid #bdbdbd;
}

.section {
  margin-bottom: 3px;
  background-color: #fff;
  border-bottom: 1px solid #c8c8c8;
}

.section.first,
.section.settings {
  padding-bottom: 8px;
}

.section-head {
  display: flex;
  align-items: center;
  justify-content: space-between;
  height: 23px;
  margin: 0;
  padding: 0 6px 0 3px;
  color: #2187bb;
  font-weight: 400;
  font-size: 14px;
  line-height: 23px;
}

.first .section-head {
  height: 20px;
  line-height: 20px;
}

.chevron {
  width: 12px;
  height: 9px;
  fill: none;
  stroke: #2187bb;
  stroke-width: 2.500;
}

.row {
  display: flex;
  align-items: center;
  gap: 2px;
  margin-top: 2px;
  padding: 0 9px 0 5px;
  line-height: 23px;
}

.row.top {
  align-items: flex-start;
  margin-top: 7px;
}

.first .row.top {
  margin-top: 8px;
}

.row.mode {
  margin-bottom: 1px;
}

.row.short {
  height: 24px;
  margin-top: 0;
}

.row.short + .row:not(.short) {
  margin-top: 3px;
}

.row label,
.row-label {
  flex: 1;
}

.first .row-label {
  padding-top: 2px;
}

.select-box {
  position: relative;
  display: inline-flex;
  width: 107px;
  height: 23px;
  font-size: 13px;
}

.select-box::after {
  content: "";
  position: absolute;
  top: 9px;
  right: 6px;
  border: 4px solid transparent;
  border-top-color: #222;
  border-bottom: 0;
}

.select-box select {
  width: 100%;
  height: 100%;
  padding: 0 4px;
  appearance: none;
  border: 1px solid #a8a8a8;
  border-radius: 0;
  background-color: #fff;
  color: inherit;
  font: inherit;
}

.icon-btn {
  display: grid;
  place-items: center;
  flex: none;
  width: 32px;
  height: 32px;
  border: 1px solid #a8a8a8;
  background-color: #fff;
}

.icon-btn svg {
  width: 24px;
  height: 24px;
}

.icon-btn.pale,
.icon-btn:disabled {
  border-color: #d0d0d0;
}

.icon-btn:disabled svg {
  filter: saturate(.2);
  opacity: .4;
}

.field {
  width: 135px;
  height: 21px;
  border: 1px solid #a8a8a8;
}

.combo {
  position: relative;
  width: 130px;
  height: 26px;
}

.combo-value {
  display: flex;
  align-items: center;
  gap: 4px;
  width: 100%;
  height: 26px;
  padding: 0 6px 2px 4px;
  border: 1px solid #a8a8a8;
}

.combo-value .mode-caret {
  margin-left: auto;
  border-top-color: #2187bb;
}

.mode-icon {
  flex: none;
  width: 16px;
  height: 16px;
}

.combo-list {
  position: absolute;
  z-index: 2;
  top: 26px;
  left: 0;
  width: 100%;
  margin: 0;
  padding: 0;
  list-style: none;
  border: 1px solid #a8a8a8;
  background-color: #fff;
}

.combo-list li {
  display: flex;
  align-items: center;
  gap: 4px;
  height: 20px;
  padding: 0 0 2px 2px;
  line-height: 18px;
}

.combo-list .active {
  background-color: #3399ff;
  color: #fff;
}

.marker {
  position: absolute;
  z-index: 3;
  top: 359px;
  left: 136px;
  width: 178px;
  height: 70px;
  pointer-events: none;
  fill: none;
  stroke: #000;
  stroke-width: 5;
}

/* right side */
.workspace {
  display: flex;
  flex: 1;
  flex-direction: column;
  min-width: 0;
}

.menubar {
  display: flex;
  align-items: center;
  gap: 14px;
  flex: none;
  height: 26px;
  padding: 0 4px 0 6px;
  background-color: #c7d7d5;
  font-size: 13px;
}

.menubar a {
  padding-bottom: 2px;
  color: inherit;
  line-height: 22px;
  text-decoration: none;
}

.search {
  width: 107px;
  height: 18px;
  margin-left: auto;
  padding: 0 1px;
  border: 1px solid #a6abab;
  background-color: #fff;
  font-family: inherit;
  font-size: 11px;
}

.search::placeholder {
  color: #999;
}

.search-icon {
  width: 16px;
  height: 16px;
  margin-left: -3px;
}

.ribbon {
  display: flex;
  flex: none;
  height: 88px;
  padding-top: 4px;
  overflow: hidden;
  border-bottom: 1px solid #dcdcdc;
  font-size: 11px;
}

.group {
  display: flex;
  flex: none;
  flex-direction: column;
  height: 80px;
  border-right: 1px solid #d4d4d4;
}

.group-body {
  display: flex;
  height: 69px;
}

.group-foot {
  display: flex;
  align-items: center;
  padding-right: 6px;
  color: #2187bb;
  line-height: 12px;
}

.group-foot span {
  flex: 1;
  text-align: center;
}

.operate {
  width: 313px;
  margin-left: -54px;
}

.operate .group-body {
  justify-content: flex-end;
  gap: 9px;
  padding-right: 5px;
}

.operate .more {
  margin-left: 2px;
}

.display {
  width: 64px;
}

.display .group-body {
  padding-left: 8px;
}

.workpiece {
  width: 112px;
}

.workpiece .group-body {
  gap: 3px;
  padding-left: 7px;
}

.analyse {
  width: 67px;
}

.analyse .group-body {
  justify-content: center;
}

.geometry {
  width: 130px;
}

.geometry .group-body {
  gap: 9px;
  padding-left: 12px;
}

.sync {
  width: 124px;
}

.sync .group-body {
  gap: 8px;
  padding-left: 12px;
}

.process {
  border-right: 0;
  padding-left: 2px;
}

.process .group-body {
  padding-left: 4px;
}

.tool {
  display: flex;
  flex: none;
  flex-direction: column;
  align-items: center;
  line-height: 14px;
  white-space: nowrap;
}

.tool:disabled {
  color: #bababa;
}

.tool-icon {
  display: grid;
  place-items: center;
  height: 34px;
  margin-bottom: 3px;
}

.tool-icon svg {
  width: 32px;
  height: 32px;
}

.more .tool-icon {
  width: 37px;
  border: 1px solid #e4e4e4;
  border-radius: 3px;
}

.more .tool-icon svg {
  width: 18px;
  height: 18px;
}

.caret {
  display: block;
  width: 0;
  border: 3px solid transparent;
  border-top-color: #222;
  border-bottom: 0;
}

.tool > .caret {
  margin-top: 5px;
}

.caret.big {
  border-width: 4px;
  border-bottom: 0;
}

.line {
  display: flex;
  align-items: center;
  gap: 4px;
}

.icon-grid {
  display: grid;
  grid-template-columns: 24px 24px;
  grid-auto-rows: 21px;
  place-items: center;
}

.icon-grid.wide {
  grid-template-columns: 26px 26px;
}

.icon-grid.single {
  grid-template-columns: 20px;
}

.icon-grid svg {
  width: 16px;
  height: 16px;
}

.selection {
  display: flex;
  align-items: center;
  flex: none;
  height: 31px;
  overflow: hidden;
  border-bottom: 2px solid #8b9496;
}

.selection .select-box {
  flex: none;
  height: 18px;
  font-size: 11px;
}

.selection .select-box::after {
  top: 8px;
  right: 7px;
  border-width: 3px;
  border-bottom: 0;
}

.selection select {
  padding: 0 2px;
}

.gray {
  color: #a0a0a0;
}

.selection .gray::after {
  border-top-color: #999;
}

.selection .type {
  width: 93px;
}

.type select {
  border-left: 0;
}

.selection .scope {
  width: 140px;
  margin: 0 7px 0 8px;
}

.selection .layer {
  width: 49px;
  margin-right: 5px;
}

.cell {
  display: grid;
  place-items: center;
  flex: none;
  width: 24px;
  height: 24px;
}

.cell.wide {
  width: 25px;
}

.cell svg {
  width: 16px;
  height: 16px;
}

.cell-caret {
  display: grid;
  place-items: center;
  flex: none;
  width: 12px;
}

.divider {
  flex: none;
  width: 1px;
  height: 22px;
  margin: 0 12px 0 8px;
  background-color: #ccc;
}

.status {
  flex: none;
  height: 21px;
  margin: 0;
  padding-left: 287px;
  font-weight: 700;
  font-size: 11px;
  line-height: 19px;
}

.viewport {
  flex: 1;
  min-height: 0;
  margin-left: 8px;
  border-left: 1px solid #8a8a8a;
  background: linear-gradient(#b1b2b4, #e3e5e6);
}

.scene {
  display: block;
  width: 100%;
  height: 100%;
  fill: none;
}

.path {
  stroke: #00ffff;
  stroke-width: 2;
}

.link {
  stroke: #00ff00;
}

.entry {
  stroke: #fff;
}

.yellow {
  stroke: #ffff00;
}

.edge {
  stroke: #333;
  stroke-width: 1;
}

.axes text {
  font-family: "Liberation Serif", serif;
  font-size: 12px;
}

.watermark {
  fill: #fff;
  stroke: #e02828;
  stroke-width: 2;
  stroke-linejoin: round;
  paint-order: stroke;
  font-family: "DejaVu Sans", "Noto Sans CJK SC", sans-serif;
  font-weight: 700;
  font-size: 16px;
}
</style>
